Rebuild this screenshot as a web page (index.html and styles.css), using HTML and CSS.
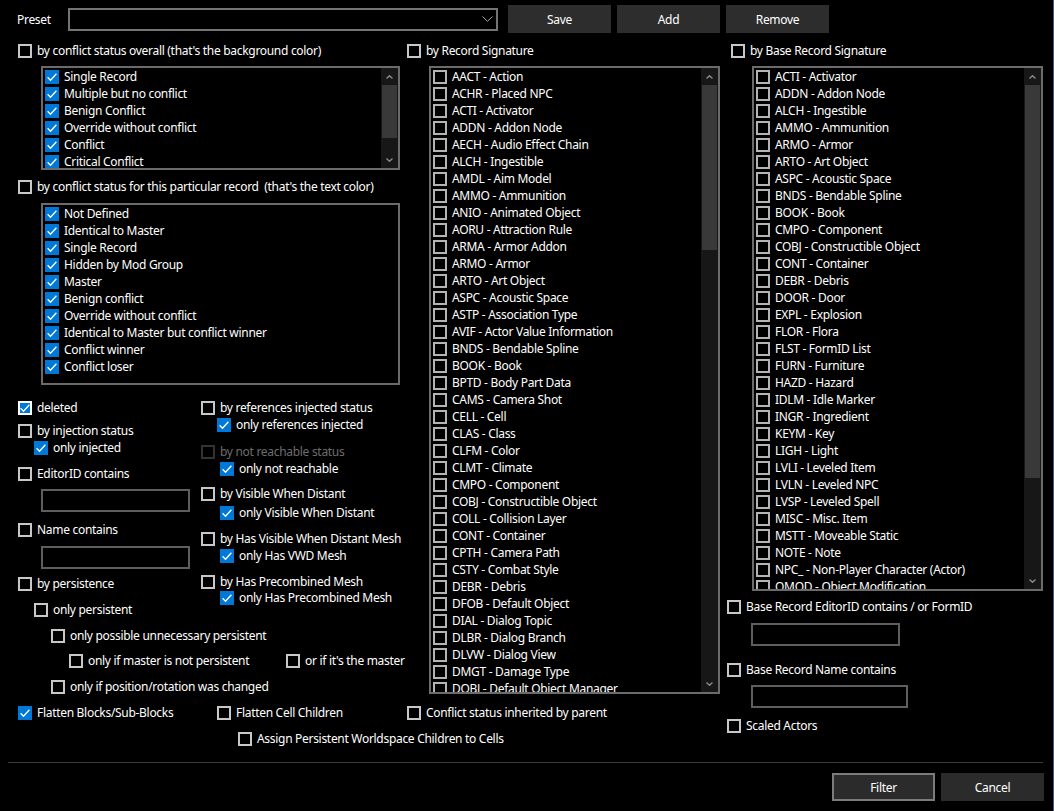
FILE: index.html
```html
<!DOCTYPE html>
<html>
<head>
<meta charset="utf-8">
<link rel="stylesheet" href="styles.css">
</head>
<body>
<div class="dialog">
  <div class="topbar">
    <span class="lbl">Preset</span>
    <div class="combo"><svg class="chev" width="11" height="6" viewBox="0 0 11 6"><polyline points="0.5,0.5 5.5,5.3 10.5,0.5"/></svg></div>
    <button class="btn">Save</button>
    <button class="btn">Add</button>
    <button class="btn">Remove</button>
  </div>

  <div class="main">
    <!-- LEFT COLUMN -->
    <div class="col">
      <label class="row"><span class="cb"></span>by conflict status overall (that's the background color)</label>
      <div class="list list1">
        <div class="items">
          <div class="row"><span class="cb on"><svg viewBox="0 0 14 14"><path d="M2.6 7.3 5.5 10.2 11.4 3.8"/></svg></span>Single Record</div>
          <div class="row"><span class="cb on"><svg viewBox="0 0 14 14"><path d="M2.6 7.3 5.5 10.2 11.4 3.8"/></svg></span>Multiple but no conflict</div>
          <div class="row"><span class="cb on"><svg viewBox="0 0 14 14"><path d="M2.6 7.3 5.5 10.2 11.4 3.8"/></svg></span>Benign Conflict</div>
          <div class="row"><span class="cb on"><svg viewBox="0 0 14 14"><path d="M2.6 7.3 5.5 10.2 11.4 3.8"/></svg></span>Override without conflict</div>
          <div class="row"><span class="cb on"><svg viewBox="0 0 14 14"><path d="M2.6 7.3 5.5 10.2 11.4 3.8"/></svg></span>Conflict</div>
          <div class="row"><span class="cb on"><svg viewBox="0 0 14 14"><path d="M2.6 7.3 5.5 10.2 11.4 3.8"/></svg></span>Critical Conflict</div>
        </div>
        <div class="sb">
          <div class="sb-arrow"><svg width="7" height="4" viewBox="0 0 7 4"><polyline points="0.5,3.5 3.5,0.7 6.5,3.5"/></svg></div>
          <div class="thumb thumb1"></div>
          <div class="sb-fill"></div>
          <div class="sb-arrow"><svg width="7" height="4" viewBox="0 0 7 4"><polyline points="0.5,0.5 3.5,3.3 6.5,0.5"/></svg></div>
        </div>
      </div>

      <label class="row mt8"><span class="cb"></span>by conflict status for this particular record&nbsp; (that's the text color)</label>
      <div class="list list2">
        <div class="items">
          <div class="row"><span class="cb on"><svg viewBox="0 0 14 14"><path d="M2.6 7.3 5.5 10.2 11.4 3.8"/></svg></span>Not Defined</div>
          <div class="row"><span class="cb on"><svg viewBox="0 0 14 14"><path d="M2.6 7.3 5.5 10.2 11.4 3.8"/></svg></span>Identical to Master</div>
          <div class="row"><span class="cb on"><svg viewBox="0 0 14 14"><path d="M2.6 7.3 5.5 10.2 11.4 3.8"/></svg></span>Single Record</div>
          <div class="row"><span class="cb on"><svg viewBox="0 0 14 14"><path d="M2.6 7.3 5.5 10.2 11.4 3.8"/></svg></span>Hidden by Mod Group</div>
          <div class="row"><span class="cb on"><svg viewBox="0 0 14 14"><path d="M2.6 7.3 5.5 10.2 11.4 3.8"/></svg></span>Master</div>
          <div class="row"><span class="cb on"><svg viewBox="0 0 14 14"><path d="M2.6 7.3 5.5 10.2 11.4 3.8"/></svg></span>Benign conflict</div>
          <div class="row"><span class="cb on"><svg viewBox="0 0 14 14"><path d="M2.6 7.3 5.5 10.2 11.4 3.8"/></svg></span>Override without conflict</div>
          <div class="row"><span class="cb on"><svg viewBox="0 0 14 14"><path d="M2.6 7.3 5.5 10.2 11.4 3.8"/></svg></span>Identical to Master but conflict winner</div>
          <div class="row"><span class="cb on"><svg viewBox="0 0 14 14"><path d="M2.6 7.3 5.5 10.2 11.4 3.8"/></svg></span>Conflict winner</div>
          <div class="row"><span class="cb on"><svg viewBox="0 0 14 14"><path d="M2.6 7.3 5.5 10.2 11.4 3.8"/></svg></span>Conflict loser</div>
        </div>
      </div>

      <div class="lower">
        <div class="sub">
          <label class="row"><span class="cb on focus"><svg viewBox="0 0 14 14"><path d="M2.6 7.3 5.5 10.2 11.4 3.8"/></svg></span>deleted</label>
          <label class="row mt6"><span class="cb"></span>by injection status</label>
          <label class="row ind16"><span class="cb on"><svg viewBox="0 0 14 14"><path d="M2.6 7.3 5.5 10.2 11.4 3.8"/></svg></span>only injected</label>
          <label class="row mt9"><span class="cb"></span>EditorID contains</label>
          <div class="input in-left mt7"></div>
          <label class="row mt9"><span class="cb"></span>Name contains</label>
          <div class="input in-left mt8"></div>
          <label class="row mt6"><span class="cb"></span>by persistence</label>
          <label class="row mt9 ind16"><span class="cb"></span>only persistent</label>
          <label class="row mt9 ind33"><span class="cb"></span>only possible unnecessary persistent</label>
          <div class="pair mt8 ind51">
            <label class="row w217"><span class="cb"></span>only if master is not persistent</label>
            <label class="row"><span class="cb"></span>or if it's the master</label>
          </div>
          <label class="row mt9 ind33"><span class="cb"></span>only if position/rotation was changed</label>
        </div>
        <div class="sub">
          <label class="row"><span class="cb"></span>by references injected status</label>
          <label class="row ind16"><span class="cb on"><svg viewBox="0 0 14 14"><path d="M2.6 7.3 5.5 10.2 11.4 3.8"/></svg></span>only references injected</label>
          <label class="row mt10 disabled"><span class="cb dis"></span>by not reachable status</label>
          <label class="row ind19"><span class="cb on"><svg viewBox="0 0 14 14"><path d="M2.6 7.3 5.5 10.2 11.4 3.8"/></svg></span>only not reachable</label>
          <label class="row mt8"><span class="cb"></span>by Visible When Distant</label>
          <label class="row mt2 ind19"><span class="cb on"><svg viewBox="0 0 14 14"><path d="M2.6 7.3 5.5 10.2 11.4 3.8"/></svg></span>only Visible When Distant</label>
          <label class="row mt9"><span class="cb"></span>by Has Visible When Distant Mesh</label>
          <label class="row ind19"><span class="cb on"><svg viewBox="0 0 14 14"><path d="M2.6 7.3 5.5 10.2 11.4 3.8"/></svg></span>only Has VWD Mesh</label>
          <label class="row mt9"><span class="cb"></span>by Has Precombined Mesh</label>
          <label class="row mtm1 ind19"><span class="cb on"><svg viewBox="0 0 14 14"><path d="M2.6 7.3 5.5 10.2 11.4 3.8"/></svg></span>only Has Precombined Mesh</label>
        </div>
      </div>

      <div class="pair mt9">
        <label class="row w199"><span class="cb on"><svg viewBox="0 0 14 14"><path d="M2.6 7.3 5.5 10.2 11.4 3.8"/></svg></span>Flatten Blocks/Sub-Blocks</label>
        <label class="row"><span class="cb"></span>Flatten Cell Children</label>
      </div>
      <label class="row mt9 ind220"><span class="cb"></span>Assign Persistent Worldspace Children to Cells</label>
    </div>

    <!-- MIDDLE COLUMN -->
    <div class="col">
      <label class="row"><span class="cb"></span>by Record Signature</label>
      <div class="list list3">
        <div class="items">
          <div class="row"><span class="cb lcb"></span>AACT - Action</div>
          <div class="row"><span class="cb lcb"></span>ACHR - Placed NPC</div>
          <div class="row"><span class="cb lcb"></span>ACTI - Activator</div>
          <div class="row"><span class="cb lcb"></span>ADDN - Addon Node</div>
          <div class="row"><span class="cb lcb"></span>AECH - Audio Effect Chain</div>
          <div class="row"><span class="cb lcb"></span>ALCH - Ingestible</div>
          <div class="row"><span class="cb lcb"></span>AMDL - Aim Model</div>
          <div class="row"><span class="cb lcb"></span>AMMO - Ammunition</div>
          <div class="row"><span class="cb lcb"></span>ANIO - Animated Object</div>
          <div class="row"><span class="cb lcb"></span>AORU - Attraction Rule</div>
          <div class="row"><span class="cb lcb"></span>ARMA - Armor Addon</div>
          <div class="row"><span class="cb lcb"></span>ARMO - Armor</div>
          <div class="row"><span class="cb lcb"></span>ARTO - Art Object</div>
          <div class="row"><span class="cb lcb"></span>ASPC - Acoustic Space</div>
          <div class="row"><span class="cb lcb"></span>ASTP - Association Type</div>
          <div class="row"><span class="cb lcb"></span>AVIF - Actor Value Information</div>
          <div class="row"><span class="cb lcb"></span>BNDS - Bendable Spline</div>
          <div class="row"><span class="cb lcb"></span>BOOK - Book</div>
          <div class="row"><span class="cb lcb"></span>BPTD - Body Part Data</div>
          <div class="row"><span class="cb lcb"></span>CAMS - Camera Shot</div>
          <div class="row"><span class="cb lcb"></span>CELL - Cell</div>
          <div class="row"><span class="cb lcb"></span>CLAS - Class</div>
          <div class="row"><span class="cb lcb"></span>CLFM - Color</div>
          <div class="row"><span class="cb lcb"></span>CLMT - Climate</div>
          <div class="row"><span class="cb lcb"></span>CMPO - Component</div>
          <div class="row"><span class="cb lcb"></span>COBJ - Constructible Object</div>
          <div class="row"><span class="cb lcb"></span>COLL - Collision Layer</div>
          <div class="row"><span class="cb lcb"></span>CONT - Container</div>
          <div class="row"><span class="cb lcb"></span>CPTH - Camera Path</div>
          <div class="row"><span class="cb lcb"></span>CSTY - Combat Style</div>
          <div class="row"><span class="cb lcb"></span>DEBR - Debris</div>
          <div class="row"><span class="cb lcb"></span>DFOB - Default Object</div>
          <div class="row"><span class="cb lcb"></span>DIAL - Dialog Topic</div>
          <div class="row"><span class="cb lcb"></span>DLBR - Dialog Branch</div>
          <div class="row"><span class="cb lcb"></span>DLVW - Dialog View</div>
          <div class="row"><span class="cb lcb"></span>DMGT - Damage Type</div>
          <div class="row"><span class="cb lcb"></span>DOBJ - Default Object Manager</div>
        </div>
        <div class="sb">
          <div class="sb-arrow"><svg width="7" height="4" viewBox="0 0 7 4"><polyline points="0.5,3.5 3.5,0.7 6.5,3.5"/></svg></div>
          <div class="thumb thumb3"></div>
          <div class="sb-fill"></div>
          <div class="sb-arrow"><svg width="7" height="4" viewBox="0 0 7 4"><polyline points="0.5,0.5 3.5,3.3 6.5,0.5"/></svg></div>
        </div>
      </div>
      <label class="row mt10"><span class="cb"></span>Conflict status inherited by parent</label>
    </div>

    <!-- RIGHT COLUMN -->
    <div class="col">
      <label class="row ind4"><span class="cb"></span>by Base Record Signature</label>
      <div class="list list4">
        <div class="items">
          <div class="row"><span class="cb lcb"></span>ACTI - Activator</div>
          <div class="row"><span class="cb lcb"></span>ADDN - Addon Node</div>
          <div class="row"><span class="cb lcb"></span>ALCH - Ingestible</div>
          <div class="row"><span class="cb lcb"></span>AMMO - Ammunition</div>
          <div class="row"><span class="cb lcb"></span>ARMO - Armor</div>
          <div class="row"><span class="cb lcb"></span>ARTO - Art Object</div>
          <div class="row"><span class="cb lcb"></span>ASPC - Acoustic Space</div>
          <div class="row"><span class="cb lcb"></span>BNDS - Bendable Spline</div>
          <div class="row"><span class="cb lcb"></span>BOOK - Book</div>
          <div class="row"><span class="cb lcb"></span>CMPO - Component</div>
          <div class="row"><span class="cb lcb"></span>COBJ - Constructible Object</div>
          <div class="row"><span class="cb lcb"></span>CONT - Container</div>
          <div class="row"><span class="cb lcb"></span>DEBR - Debris</div>
          <div class="row"><span class="cb lcb"></span>DOOR - Door</div>
          <div class="row"><span class="cb lcb"></span>EXPL - Explosion</div>
          <div class="row"><span class="cb lcb"></span>FLOR - Flora</div>
          <div class="row"><span class="cb lcb"></span>FLST - FormID List</div>
          <div class="row"><span class="cb lcb"></span>FURN - Furniture</div>
          <div class="row"><span class="cb lcb"></span>HAZD - Hazard</div>
          <div class="row"><span class="cb lcb"></span>IDLM - Idle Marker</div>
          <div class="row"><span class="cb lcb"></span>INGR - Ingredient</div>
          <div class="row"><span class="cb lcb"></span>KEYM - Key</div>
          <div class="row"><span class="cb lcb"></span>LIGH - Light</div>
          <div class="row"><span class="cb lcb"></span>LVLI - Leveled Item</div>
          <div class="row"><span class="cb lcb"></span>LVLN - Leveled NPC</div>
          <div class="row"><span class="cb lcb"></span>LVSP - Leveled Spell</div>
          <div class="row"><span class="cb lcb"></span>MISC - Misc. Item</div>
          <div class="row"><span class="cb lcb"></span>MSTT - Moveable Static</div>
          <div class="row"><span class="cb lcb"></span>NOTE - Note</div>
          <div class="row"><span class="cb lcb"></span>NPC_ - Non-Player Character (Actor)</div>
          <div class="row"><span class="cb lcb"></span>OMOD - Object Modification</div>
        </div>
        <div class="sb">
          <div class="sb-arrow"><svg width="7" height="4" viewBox="0 0 7 4"><polyline points="0.5,3.5 3.5,0.7 6.5,3.5"/></svg></div>
          <div class="thumb thumb4"></div>
          <div class="sb-fill"></div>
          <div class="sb-arrow"><svg width="7" height="4" viewBox="0 0 7 4"><polyline points="0.5,0.5 3.5,3.3 6.5,0.5"/></svg></div>
        </div>
      </div>
      <label class="row mt7"><span class="cb"></span>Base Record EditorID contains / or FormID</label>
      <div class="input in-right mt8"></div>
      <label class="row mt15"><span class="cb"></span>Base Record Name contains</label>
      <div class="input in-right wide mt7"></div>
      <label class="row mt9"><span class="cb"></span>Scaled Actors</label>
    </div>
  </div>

  <div class="sep"></div>
  <div class="footer">
    <button class="btn default">Filter</button>
    <button class="btn">Cancel</button>
  </div>
</div>
</body>
</html>
```

FILE: styles.css
```css
html, body {
  margin: 0;
  padding: 0;
  background: #000;
}
body {
  font-family: "Noto Sans", "Open Sans", sans-serif;
  font-size: 12px;
  letter-spacing: -0.3px;
  color: #fff;
}
.dialog {
  width: 1054px;
  height: 811px;
  box-sizing: border-box;
  border-right: 1px solid #3d5a92;
  overflow: hidden;
}

/* top bar */
.topbar {
  display: flex;
  align-items: center;
  height: 28px;
  padding-top: 5px;
}
.lbl {
  width: 51px;
  padding-left: 17px;
  box-sizing: content-box;
  flex: none;
}
.combo {
  width: 430px;
  height: 23px;
  box-sizing: border-box;
  border: 2px solid #747474;
  display: flex;
  align-items: center;
  justify-content: flex-end;
  padding-right: 3px;
  margin-right: 10px;
  flex: none;
}
.chev polyline {
  fill: none;
  stroke: #a8a8a8;
  stroke-width: 1;
}
.btn {
  width: 103px;
  height: 28px;
  padding: 0;
  margin: 0 6px 0 0;
  border: 0;
  background: #2d2d2d;
  color: #fff;
  font: inherit;
  letter-spacing: inherit;
  flex: none;
}

/* main grid */
.main {
  display: grid;
  grid-template-columns: 389px 320px 316px;
  padding-left: 18px;
  margin-top: 9px;
}
.col {
  display: flex;
  flex-direction: column;
  align-items: flex-start;
}

.row {
  display: flex;
  align-items: center;
  gap: 5px;
  height: 17px;
  line-height: 17px;
  white-space: nowrap;
}
.cb {
  width: 14px;
  height: 14px;
  flex: none;
  box-sizing: border-box;
  box-shadow: inset 0 0 0 2px #c8c8c8;
  display: flex;
}
.cb.lcb {
  box-shadow: inset 0 0 0 2px #b4b4b4;
}
.cb.on {
  background: #0078d7;
  box-shadow: none;
}
.cb.on.focus {
  box-shadow: inset 0 0 0 2px #fff;
}
.cb.dis {
  box-shadow: inset 0 0 0 2px #333;
}
.cb svg {
  width: 14px;
  height: 14px;
}
.cb svg path {
  fill: none;
  stroke: #fff;
  stroke-width: 1.3;
}
.disabled {
  color: #6d6d6d;
}

/* lists */
.list {
  display: flex;
  box-sizing: border-box;
  border: 2px solid #6b6b6b;
  overflow: hidden;
  margin-top: 7px;
}
.items {
  flex: 1;
  padding-left: 2px;
  overflow: hidden;
  display: flex;
  flex-direction: column;
}
.list1 { margin-left: 23px; width: 359px; height: 104px; }
.list2 { margin-left: 23px; width: 359px; height: 182px; margin-top: 8px; }
.list3 { margin-left: 22px; width: 291px; height: 628px; }
.list4 { margin-left: 25px; width: 291px; height: 525px; }

.sb {
  width: 17px;
  flex: none;
  background: #171717;
  display: flex;
  flex-direction: column;
}
.sb-arrow {
  height: 17px;
  flex: none;
  display: flex;
  align-items: center;
  justify-content: center;
}
.sb-arrow polyline {
  fill: none;
  stroke: #8c8c8c;
  stroke-width: 1.3;
}
.thumb {
  margin: 0 1px;
  background: #393939;
  flex: none;
}
.thumb1 { height: 53px; }
.thumb3 { height: 165px; }
.thumb4 { height: 393px; }
.sb-fill { flex: 1; }

/* inputs */
.input {
  height: 23px;
  width: 149px;
  box-sizing: border-box;
  border: 2px solid #5e5e5e;
  background: #000;
}
.in-left { margin-left: 23px; }
.in-right { margin-left: 24px; }
.input.wide { width: 157px; }

/* lower left block */
.lower {
  display: grid;
  grid-template-columns: 183px 1fr;
  margin-top: 14px;
  width: 100%;
}
.sub {
  display: flex;
  flex-direction: column;
  align-items: flex-start;
}
.pair {
  display: flex;
}
.w217 { width: 217px; }
.w199 { width: 199px; }

/* spacing helpers */
.mt2 { margin-top: 2px; }
.mt6 { margin-top: 6px; }
.mt7 { margin-top: 7px; }
.mt8 { margin-top: 8px; }
.mt9 { margin-top: 9px; }
.mt10 { margin-top: 10px; }
.mt15 { margin-top: 15px; }
.mtm1 { margin-top: -1px; }
.ind4 { padding-left: 4px; }
.ind16 { padding-left: 16px; }
.ind19 { padding-left: 19px; }
.ind33 { padding-left: 33px; }
.ind51 { padding-left: 51px; }
.ind220 { padding-left: 220px; }

/* footer */
.sep {
  height: 1px;
  background: #3c3c3c;
  margin: 15px 10px 0 8px;
}
.footer {
  display: flex;
  justify-content: flex-end;
  padding-right: 3px;
  margin-top: 10px;
}
.btn.default {
  box-shadow: inset 0 0 0 2px #7c7c7c;
  background: #2b2b2b;
}
.footer .btn {
  background: #2b2b2b;
}
```
